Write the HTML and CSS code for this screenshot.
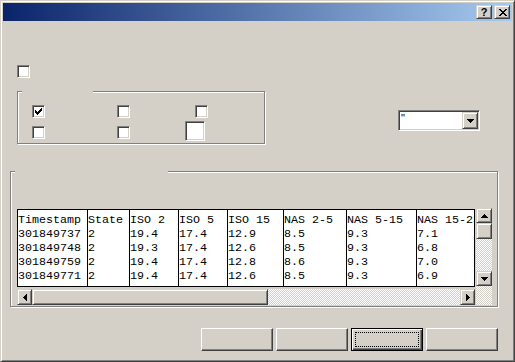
FILE: index.html
```html
<!DOCTYPE html>
<html>
<head>
<meta charset="utf-8">
<link rel="stylesheet" href="styles.css">
</head>
<body>
<div class="window">
  <div class="titlebar">
    <div class="tbtn help">?</div>
    <div class="tbtn close">
      <svg width="8" height="7" viewBox="0 0 8 7" shape-rendering="crispEdges"><path d="M0 0h2v1h-2z M6 0h2v1h-2z M1 1h2v1h-2z M5 1h2v1h-2z M2 2h4v1h-4z M3 3h2v1h-2z M2 4h4v1h-4z M1 5h2v1h-2z M5 5h2v1h-2z M0 6h2v1h-2z M6 6h2v1h-2z" fill="#000"/></svg>
    </div>
  </div>
  <div class="client">
    <span class="chk top-chk"></span>
    <div class="row-mid">
      <div class="group g1">
        <span class="legend l1"></span>
        <span class="chk">
          <svg width="7" height="7" viewBox="0 0 7 7" shape-rendering="crispEdges"><path d="M6 0h1v1h-1z M5 1h2v1h-2z M0 2h1v1h-1z M4 2h3v1h-3z M0 3h2v1h-2z M3 3h3v1h-3z M0 4h5v1h-5z M1 5h3v1h-3z M2 6h1v1h-1z" fill="#000"/></svg>
        </span>
        <span class="chk"></span>
        <span class="chk shift"></span>
        <span class="chk low"></span>
        <span class="chk low"></span>
        <span class="bigbox"></span>
      </div>
      <div class="combo">
        <span class="combo-text">"</span>
        <span class="sbtn combo-btn">
          <svg width="7" height="4" viewBox="0 0 7 4" shape-rendering="crispEdges"><path d="M0 0h7v1h-7z M1 1h5v1h-5z M2 2h3v1h-3z M3 3h1v1h-1z" fill="#000"/></svg>
        </span>
      </div>
    </div>
    <div class="group g2">
      <span class="legend l2"></span>
      <div class="lv">
        <div class="list">
          <div class="col c1">Timestamp<br>301849737<br>301849748<br>301849759<br>301849771</div>
          <div class="col c2">State<br>2<br>2<br>2<br>2</div>
          <div class="col c3">ISO 2<br>19.4<br>19.3<br>19.4<br>19.4</div>
          <div class="col c4">ISO 5<br>17.4<br>17.4<br>17.4<br>17.4</div>
          <div class="col c5">ISO 15<br>12.9<br>12.6<br>12.8<br>12.6</div>
          <div class="col c6">NAS 2-5<br>8.5<br>8.5<br>8.6<br>8.5</div>
          <div class="col c7">NAS 5-15<br>9.3<br>9.3<br>9.3<br>9.3</div>
          <div class="col c8">NAS 15-25<br>7.1<br>6.8<br>7.0<br>6.9</div>
        </div>
        <div class="vscroll">
          <span class="sbtn vbtn">
            <svg width="7" height="4" viewBox="0 0 7 4" shape-rendering="crispEdges"><path d="M3 0h1v1h-1z M2 1h3v1h-3z M1 2h5v1h-5z M0 3h7v1h-7z" fill="#000"/></svg>
          </span>
          <span class="sbtn vthumb"></span>
          <span class="dither vtrack"></span>
          <span class="sbtn vbtn">
            <svg width="7" height="4" viewBox="0 0 7 4" shape-rendering="crispEdges"><path d="M0 0h7v1h-7z M1 1h5v1h-5z M2 2h3v1h-3z M3 3h1v1h-1z" fill="#000"/></svg>
          </span>
          <span class="dither vcorner"></span>
        </div>
        <div class="hscroll">
          <span class="sbtn hbtn">
            <svg width="4" height="7" viewBox="0 0 4 7" shape-rendering="crispEdges"><path d="M3 0h1v7h-1z M2 1h1v5h-1z M1 2h1v3h-1z M0 3h1v1h-1z" fill="#000"/></svg>
          </span>
          <span class="sbtn hthumb"></span>
          <span class="dither htrack"></span>
          <span class="sbtn hbtn">
            <svg width="4" height="7" viewBox="0 0 4 7" shape-rendering="crispEdges"><path d="M0 0h1v7h-1z M1 1h1v5h-1z M2 2h1v3h-1z M3 3h1v1h-1z" fill="#000"/></svg>
          </span>
        </div>
      </div>
    </div>
    <div class="buttons">
      <span class="pbtn"></span>
      <span class="pbtn"></span>
      <span class="pbtn default"><span class="focus"></span></span>
      <span class="pbtn"></span>
    </div>
  </div>
</div>
</body>
</html>
```

FILE: styles.css
```css
html, body {
  margin: 0;
  padding: 0;
}
body {
  width: 515px;
  height: 362px;
  overflow: hidden;
  background: #d4d0c8;
  font-family: "Liberation Sans", Arial, sans-serif;
  font-size: 11px;
}
.window {
  box-sizing: border-box;
  width: 515px;
  height: 362px;
  border: 1px solid;
  border-color: #d4d0c8 #404040 #404040 #d4d0c8;
  box-shadow: inset 1px 1px #fff, inset -1px -1px #808080;
  padding: 2px;
  background: #d4d0c8;
  display: flex;
  flex-direction: column;
}
.titlebar {
  flex: none;
  box-sizing: border-box;
  height: 18px;
  background: linear-gradient(to right, #0a246a, #a6caf0);
  display: flex;
  align-items: flex-start;
  justify-content: flex-end;
  gap: 2px;
  padding: 2px 2px 0 0;
}
.tbtn {
  box-sizing: border-box;
  width: 16px;
  height: 14px;
  background: #d4d0c8;
  border: 1px solid;
  border-color: #d4d0c8 #404040 #404040 #d4d0c8;
  box-shadow: inset 1px 1px #fff, inset -1px -1px #808080;
  display: flex;
  align-items: center;
  justify-content: center;
}
.help {
  font-weight: bold;
  font-size: 11px;
  line-height: 11px;
  color: #000;
  padding-top: 1px;
}
.close svg {
  display: block;
  margin-left: 1px;
}
.client {
  flex: 1;
  display: flex;
  flex-direction: column;
  align-items: flex-start;
  padding: 44px 0 0 7px;
}
.chk {
  box-sizing: border-box;
  display: block;
  width: 13px;
  height: 13px;
  background: #fff;
  border: 1px solid;
  border-color: #808080 #fff #fff #808080;
  box-shadow: inset 1px 1px #404040, inset -1px -1px #d4d0c8;
  padding: 2px;
}
.chk svg {
  display: block;
}
.top-chk {
  margin-left: 7px;
}
.row-mid {
  display: flex;
  align-items: flex-start;
  margin-top: 13px;
}
.group {
  position: relative;
  box-sizing: border-box;
  border: 1px solid #808080;
  box-shadow: inset 1px 1px #fff, 1px 1px #fff;
}
.legend {
  position: absolute;
  top: -1px;
  left: 4px;
  height: 2px;
  background: #d4d0c8;
}
.l1 {
  width: 71px;
}
.l2 {
  width: 153px;
}
.g1 {
  margin-left: 7px;
  width: 248px;
  height: 53px;
  display: grid;
  grid-template-columns: 85px 68px 40px;
  grid-template-rows: 13px 20px;
  row-gap: 3px;
  align-items: start;
  padding: 13px 0 0 14px;
}
.shift {
  margin-left: 10px;
}
.low {
  margin-top: 5px;
}
.bigbox {
  box-sizing: border-box;
  width: 20px;
  height: 20px;
  background: #fff;
  border: 1px solid;
  border-color: #808080 #fff #fff #808080;
  box-shadow: inset 1px 1px #404040, inset -1px -1px #d4d0c8;
}
.combo {
  margin-left: 133px;
  margin-top: 19px;
  box-sizing: border-box;
  width: 82px;
  height: 21px;
  background: #fff;
  border: 1px solid;
  border-color: #808080 #fff #fff #808080;
  box-shadow: inset 1px 1px #404040, inset -1px -1px #d4d0c8;
  padding: 1px;
  display: flex;
}
.combo-text {
  flex: 1;
  padding-left: 1px;
  line-height: 13px;
  font-size: 11px;
  color: #000;
}
.sbtn {
  box-sizing: border-box;
  background: #d4d0c8;
  border: 1px solid;
  border-color: #d4d0c8 #404040 #404040 #d4d0c8;
  box-shadow: inset 1px 1px #fff, inset -1px -1px #808080;
  display: flex;
  align-items: center;
  justify-content: center;
}
.sbtn svg {
  display: block;
}
.combo-btn {
  width: 16px;
  height: 17px;
}
.g2 {
  margin-top: 27px;
  width: 488px;
  height: 136px;
  padding: 36px 0 0 6px;
}
.lv {
  display: grid;
  grid-template-columns: 458px 18px;
  grid-template-rows: 79px 18px;
}
.list {
  grid-column: 1;
  grid-row: 1;
  margin-top: 1px;
  box-sizing: border-box;
  height: 78px;
  border: 1px solid #000;
  background: #fff;
  display: flex;
  overflow: hidden;
}
.col {
  flex: none;
  box-sizing: border-box;
  height: 100%;
  border-right: 1px solid #000;
  padding-top: 3px;
  font-family: "Liberation Mono", "Courier New", monospace;
  font-size: 11.667px;
  line-height: 14px;
  color: #000;
  white-space: nowrap;
  overflow: hidden;
}
.c1 { width: 70px; }
.c2 { width: 42px; }
.c3 { width: 49px; }
.c4 { width: 49px; }
.c5 { width: 56px; }
.c6 { width: 63px; }
.c7 { width: 70px; }
.c8 { width: 70px; }
.vscroll {
  grid-column: 2;
  grid-row: 1 / 3;
  margin-left: 1px;
  width: 16px;
  display: flex;
  flex-direction: column;
}
.vbtn {
  height: 15px;
}
.vthumb {
  height: 16px;
}
.vtrack {
  height: 32px;
}
.vcorner {
  flex: 1;
}
.dither {
  display: block;
  background-color: #d4d0c8;
  background-image: conic-gradient(#fff 25%, #d4d0c8 0 50%, #fff 0 75%, #d4d0c8 0);
  background-size: 2px 2px;
}
.hscroll {
  grid-column: 1;
  grid-row: 2;
  margin-top: 2px;
  height: 16px;
  display: flex;
}
.hbtn {
  width: 15px;
}
.hthumb {
  width: 236px;
}
.htrack {
  flex: 1;
}
.buttons {
  align-self: stretch;
  margin-top: 21px;
  margin-right: 14px;
  display: flex;
  justify-content: flex-end;
  gap: 3px;
}
.pbtn {
  box-sizing: border-box;
  display: block;
  width: 72px;
  height: 23px;
  background: #d4d0c8;
  border: 1px solid;
  border-color: #fff #404040 #404040 #fff;
  box-shadow: inset -1px -1px #808080;
}
.pbtn.default {
  border: 1px solid #000;
  box-shadow: inset 1px 1px #fff, inset -1px -1px #404040, inset -2px -2px #808080;
  padding: 3px;
}
.focus {
  display: block;
  box-sizing: border-box;
  height: 100%;
  border: 1px dotted #000;
}
```
